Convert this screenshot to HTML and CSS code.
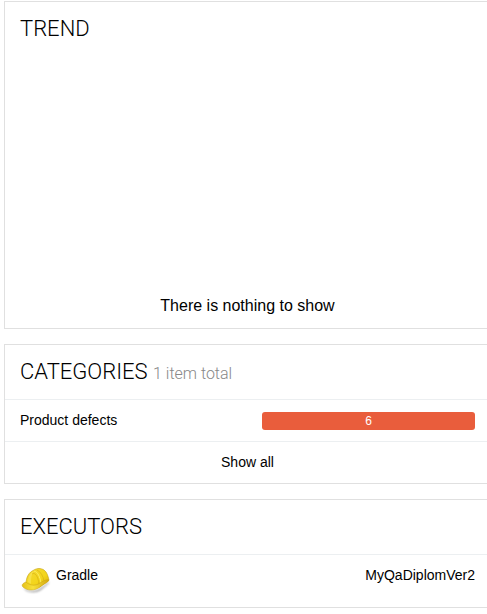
FILE: index.html
```html
<!DOCTYPE html>
<html lang="en">
<head>
  <meta charset="utf-8">
  <meta name="viewport" content="width=device-width, initial-scale=1">
  <title>Overview</title>
  <link rel="stylesheet" href="styles.css">
</head>
<body>
  <main class="overview">
    <section class="widget widget--trend">
      <h2 class="widget__title">TREND</h2>
      <p class="widget__empty">There is nothing to show</p>
    </section>

    <section class="widget">
      <h2 class="widget__title">CATEGORIES <span class="widget__subtitle">1 item total</span></h2>
      <a class="row row--split" href="#categories/product-defects">
        <span>Product defects</span>
        <span class="bar">6</span>
      </a>
      <a class="row row--center" href="#categories">Show all</a>
    </section>

    <section class="widget">
      <h2 class="widget__title">EXECUTORS</h2>
      <div class="row row--executor">
        <svg class="executor-icon" viewBox="0 0 32 29" aria-hidden="true">
          <defs>
            <linearGradient id="shell" x1="0" y1="0" x2="1" y2="1">
              <stop offset="0" stop-color="#f3d935"/>
              <stop offset=".6" stop-color="#f3d51a"/>
              <stop offset="1" stop-color="#d9ac08"/>
            </linearGradient>
            <linearGradient id="brim" x1="0" y1="0" x2="1" y2="0">
              <stop offset="0" stop-color="#e6c21c"/>
              <stop offset=".4" stop-color="#f7e03a"/>
              <stop offset="1" stop-color="#d4a70c"/>
            </linearGradient>
            <filter id="soft" x="-20%" y="-40%" width="140%" height="180%">
              <feGaussianBlur stdDeviation=".8"/>
            </filter>
          </defs>
          <path d="M3 20C7 25 16 25 21 21L29 15L29 16L22 22C16 27 6 26 3 20Z" fill="#555" opacity=".65" filter="url(#soft)"/>
          <path d="M6 17C6 10 9 5 14 3C17 1 21 1 24 3C27 5 28 9 29 13L20 20L8 20Z" fill="url(#shell)" stroke="#c5a11a" stroke-width=".6"/>
          <path d="M8 15C8 10 10 6 14 4C11 8 11 12 11 17Z" fill="#fff38a" opacity=".35"/>
          <path d="M12 7C15 5 18 9 19 17M17 3C21 5 23 9 24 14" fill="none" stroke="#d3ad14" stroke-width=".6"/>
          <path d="M14 4C18 5 20 10 21 16" fill="none" stroke="#fdec62" stroke-width="1"/>
          <path d="M6 15C3 16 1 18 3 20C7 24 15 24 20 20C23 17 28 16 29 13C27 12 23 14 20 16C16 19 10 19 6 15Z" fill="url(#brim)" stroke="#c6a014" stroke-width=".5"/>
        </svg>
        <span class="executor-name">Gradle</span>
        <span>MyQaDiplomVer2</span>
      </div>
    </section>
  </main>
</body>
</html>
```
FILE: styles.css
```css
* {
  box-sizing: border-box;
}

body {
  margin: 0;
  overflow-x: hidden;
  background: #fff;
  color: #000;
  font: 14px/16px "Liberation Sans", Arial, sans-serif;
}

/* The column runs slightly past the right edge of the window. */
.overview {
  display: flex;
  flex-direction: column;
  gap: 15px;
  margin: 1px -4px 6px 4px;
}

.widget {
  border: 1px solid #e0e0e0;
}

.widget--trend {
  display: flex;
  flex-direction: column;
  justify-content: space-between;
  min-height: 328px;
}

.widget__title {
  margin: 0;
  padding: 15px;
  font: 300 22px/24px Roboto, "Liberation Sans", sans-serif;
}

.widget__subtitle {
  color: #888;
  font-size: 16px;
  line-height: 16px;
}

.widget__empty {
  margin: 0;
  padding: 12px 15px;
  font-size: 16px;
  line-height: 20px;
  text-align: center;
}

.row {
  display: flex;
  min-height: 42px;
  padding: 12px 15px 11px;
  border-top: 1px solid #eceff1;
  color: inherit;
  text-decoration: none;
}

.row--split > * {
  flex: 1;
}

.row--center {
  justify-content: center;
}

.bar {
  max-width: 213px;
  margin-left: auto;
  border-radius: 3px;
  background: #e95d3c;
  color: #fff;
  font-size: 12px;
  line-height: 18px;
  text-align: center;
}

.row--executor {
  gap: 4px;
}

.executor-icon {
  width: 32px;
  height: 29px;
}

.executor-name {
  flex: 1;
}
```
